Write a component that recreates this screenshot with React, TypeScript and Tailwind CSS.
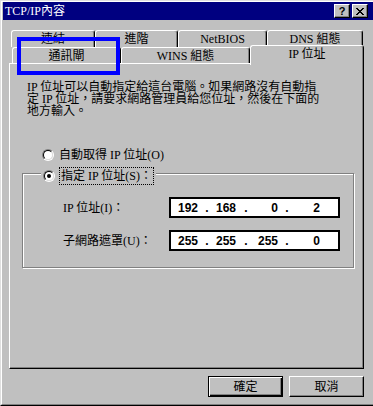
import React from "react";

const FONT = "font-['Liberation_Serif','Noto_Sans_CJK_TC',serif]";

function Radio({ checked }: { checked?: boolean }) {
  return (
    <span className="inline-block w-[12px] h-[12px] shrink-0 rounded-full border border-t-[#808080] border-l-[#808080] border-r-white border-b-white">
      <span className="flex items-center justify-center w-full h-full rounded-full border border-t-black border-l-black border-r-[#dfdfdf] border-b-[#dfdfdf] bg-white">
        {checked && <span className="block w-[4px] h-[4px] rounded-full bg-black" />}
      </span>
    </span>
  );
}

function IpField({ parts }: { parts: string[] }) {
  return (
    <div className="w-[171px] h-[21px] border-2 border-black bg-white flex items-center font-['Liberation_Sans',sans-serif] font-bold text-[12px] leading-[12px] text-black">
      <span className="w-[27px] text-right">{parts[0]}</span>
      <span className="w-[18px] text-center">.</span>
      <span className="w-[20px] text-right">{parts[1]}</span>
      <span className="w-[20px] text-center">.</span>
      <span className="w-[22px] text-right">{parts[2]}</span>
      <span className="w-[18px] text-center">.</span>
      <span className="w-[24px] text-right">{parts[3]}</span>
    </div>
  );
}

export default function App() {
  return (
    <div className={`relative w-[373px] h-[406px] overflow-hidden bg-[#c0c0c0] text-black text-[12px] leading-[12px] ${FONT}`}>
      <div className="w-[377px] h-[406px] border border-t-[#dfdfdf] border-l-[#dfdfdf] border-r-black border-b-black">
        <div className="h-full border border-t-white border-l-white border-r-[#808080] border-b-[#808080] pl-[1px] flex flex-col">
          {/* Title bar */}
          <div className="h-[18px] bg-[#000080] flex items-center justify-between pl-[2px] pr-[7px]">
            <span className="text-white text-[12px] leading-[12px]">TCP/IP內容</span>
            <div className="flex gap-[2px]">
              <div className="w-[16px] h-[14px] bg-[#c0c0c0] border border-t-white border-l-white border-r-black border-b-black shadow-[inset_-1px_-1px_0_#808080] flex items-center justify-center font-['Liberation_Sans',sans-serif] font-bold text-[11px] leading-[11px]">
                ?
              </div>
              <div className="w-[16px] h-[14px] bg-[#c0c0c0] border border-t-white border-l-white border-r-black border-b-black shadow-[inset_-1px_-1px_0_#808080] flex items-center justify-center">
                <svg width="8" height="7" viewBox="0 0 8 7" shapeRendering="crispEdges">
                  <path d="M0 0h2v1h-2zM6 0h2v1h-2zM1 1h2v1h-2zM5 1h2v1h-2zM2 2h4v1h-4zM3 3h2v1h-2zM2 4h4v1h-4zM1 5h2v1h-2zM5 5h2v1h-2zM0 6h2v1h-2zM6 6h2v1h-2z" fill="#000" />
                </svg>
              </div>
            </div>
          </div>

          {/* Back tab row */}
          <div className="mt-[10px] ml-[8px] flex h-[17px]">
            <div className="w-[84px] h-full flex items-center justify-center border-l border-t border-white border-r border-r-black rounded-t-[3px] shadow-[inset_-1px_0_0_#808080]">連結</div>
            <div className="w-[83px] h-full flex items-center justify-center border-l border-t border-white border-r border-r-black rounded-t-[3px] shadow-[inset_-1px_0_0_#808080]">進階</div>
            <div className="w-[89px] h-full flex items-center justify-center border-l border-t border-white border-r border-r-black rounded-t-[3px] shadow-[inset_-1px_0_0_#808080]">NetBIOS</div>
            <div className="w-[96px] h-full flex items-center justify-center border-l border-t border-white border-r border-r-black rounded-t-[3px] shadow-[inset_-1px_0_0_#808080]">DNS 組態</div>
          </div>

          {/* Front tab row */}
          <div className="ml-[9px] flex h-[16px]">
            <div className="w-[109px] h-full flex items-center justify-center border-l border-t border-white border-r border-r-black rounded-t-[3px] shadow-[inset_-1px_0_0_#808080]">通訊閘</div>
            <div className="w-[129px] h-full flex items-center justify-center border-l border-t border-white border-r border-r-black rounded-t-[3px] shadow-[inset_-1px_0_0_#808080]">WINS 組態</div>
            <div className="relative z-10 -mt-[2px] w-[114px] h-[20px] pb-[4px] bg-[#c0c0c0] flex items-center justify-center border-l border-t border-white border-r border-r-black rounded-t-[3px] shadow-[inset_-1px_0_0_#808080]">IP 位址</div>
          </div>

          {/* Panel */}
          <div className="ml-[6px] w-[355px] h-[306px] border border-t-white border-l-white border-r-black border-b-black shadow-[inset_-1px_-1px_0_#808080] flex flex-col">
            <div className="ml-[17px] mt-[17px] flex flex-col">
              <div className="h-[12px] leading-[12px] whitespace-nowrap">IP 位址可以自動指定給這台電腦。如果網路沒有自動指</div>
              <div className="h-[12px] leading-[12px] whitespace-nowrap">定 IP 位址，請要求網路管理員給您位址，然後在下面的</div>
              <div className="h-[12px] leading-[12px] whitespace-nowrap">地方輸入。</div>
            </div>

            <div className="ml-[32px] mt-[32px] h-[12px] flex items-center gap-[5px]">
              <Radio />
              <span>自動取得 IP 位址(O)</span>
            </div>

            <div className="ml-[12px] mt-[12px] w-[332px] border border-[#808080] shadow-[inset_1px_1px_0_#fff,1px_1px_0_#fff] pb-[16px] flex flex-col">
              <div className="-mt-[7px] ml-[18px] self-start h-[18px] px-[2px] bg-[#c0c0c0] flex items-center gap-[4px]">
                <Radio checked />
                <span className="border border-dotted border-black h-[18px] flex items-center px-[1px]">指定 IP 位址(S)：</span>
              </div>
              <div className="mt-[12px] ml-[40px] flex items-center">
                <span className="w-[106px]">IP 位址(I)：</span>
                <IpField parts={["192", "168", "0", "2"]} />
              </div>
              <div className="mt-[12px] ml-[40px] flex items-center">
                <span className="w-[106px]">子網路遮罩(U)：</span>
                <IpField parts={["255", "255", "255", "0"]} />
              </div>
            </div>
          </div>

          {/* Buttons */}
          <div className="ml-[6px] w-[355px] mt-[7px] flex justify-end gap-[6px]">
            <div className="w-[75px] h-[21px] border border-black shadow-[inset_1px_1px_0_#fff,inset_-1px_-1px_0_#000,inset_-2px_-2px_0_#808080] flex items-center justify-center">
              確定
            </div>
            <div className="w-[75px] h-[21px] border border-t-white border-l-white border-r-black border-b-black shadow-[inset_-1px_-1px_0_#808080] flex items-center justify-center">
              取消
            </div>
          </div>
        </div>
      </div>

      {/* Blue annotation rectangle */}
      <div className="absolute left-[17px] top-[37px] w-[103px] h-[38px] border-4 border-[#0000ff]" />
    </div>
  );
}
